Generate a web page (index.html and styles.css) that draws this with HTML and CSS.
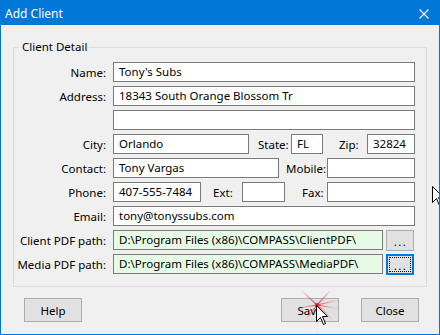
FILE: index.html
```html
<!DOCTYPE html>
<html>
<head>
<meta charset="utf-8">
<link rel="stylesheet" href="styles.css">
</head>
<body>
<div class="window">
  <div class="titlebar">
    <span class="title">Add Client</span>
    <svg class="close" width="10" height="10" viewBox="0 0 10 10"><path d="M0.5 0.5 L9.5 9.5 M9.5 0.5 L0.5 9.5" stroke="#fff" stroke-width="1.1" fill="none"/></svg>
  </div>
  <div class="content">
    <div class="group">
      <span class="group-title">Client Detail</span>
      <div class="row"><span class="lbl">Name:</span><div class="field full">Tony's Subs</div></div>
      <div class="row"><span class="lbl">Address:</span><div class="field full">18343 South Orange Blossom Tr</div></div>
      <div class="row"><span class="lbl"></span><div class="field full"></div></div>
      <div class="row">
        <span class="lbl">City:</span><div class="field w-city">Orlando</div>
        <span class="sub l-state">State:</span><div class="field w-state">FL</div>
        <span class="sub l-zip">Zip:</span><div class="field w-zip">32824</div>
      </div>
      <div class="row">
        <span class="lbl">Contact:</span><div class="field w-contact">Tony Vargas</div>
        <span class="sub l-mobile">Mobile:</span><div class="field w-88"></div>
      </div>
      <div class="row">
        <span class="lbl">Phone:</span><div class="field w-88">407-555-7484</div>
        <span class="sub l-ext">Ext:</span><div class="field w-ext"></div>
        <span class="sub l-fax">Fax:</span><div class="field w-88"></div>
      </div>
      <div class="row"><span class="lbl">Email:</span><div class="field full">tony@tonyssubs.com</div></div>
      <div class="row">
        <span class="lbl">Client PDF path:</span><div class="field path">D:\Program Files (x86)\COMPASS\ClientPDF\</div>
        <div class="browse"><span>...</span></div>
      </div>
      <div class="row">
        <span class="lbl">Media PDF path:</span><div class="field path">D:\Program Files (x86)\COMPASS\MediaPDF\</div>
        <div class="browse focused"><span class="focus-ring">...</span></div>
      </div>
    </div>
    <div class="buttons">
      <div class="btn">Help</div>
      <div class="spacer"></div>
      <div class="btn">Save</div>
      <div class="btn">Close</div>
    </div>
  </div>

  <svg class="sparkle" width="46" height="48" viewBox="0 0 46 48">
    <defs>
      <radialGradient id="rg" cx="20" cy="17" r="22" gradientUnits="userSpaceOnUse">
        <stop offset="0" stop-color="#e8303a" stop-opacity="1"/>
        <stop offset="1" stop-color="#f48890" stop-opacity="0.1"/>
      </radialGradient>
    </defs>
    <g stroke="url(#rg)" stroke-width="1.2" fill="none">
      <path d="M20 17 L4 2"/>
      <path d="M20 17 L42 12"/>
      <path d="M20 17 L43 21"/>
      <path d="M20 17 L2 20"/>
      <path d="M20 17 L20 46"/>
      <path d="M20 17 L10 30"/>
      <path d="M20 17 L33 3"/>
      <path d="M20 17 L36 32"/>
    </g>
    <circle cx="20" cy="17" r="2" fill="#e02030"/>
  </svg>
  <svg class="cursor cursor-save" width="13" height="21" viewBox="0 0 13 21"><path d="M0.5 0.5 L0.5 16.5 L4.5 12.5 L7.5 19.5 L9.5 18.5 L6.5 11.5 L11.5 11.5 Z" fill="#fff" stroke="#000" stroke-width="1"/></svg>
  <svg class="cursor cursor-edge" width="13" height="21" viewBox="0 0 13 21"><path d="M0.5 0.5 L0.5 16.5 L4.5 12.5 L7.5 19.5 L9.5 18.5 L6.5 11.5 L11.5 11.5 Z" fill="#fff" stroke="#000" stroke-width="1"/></svg>
</div>
</body>
</html>
```
FILE: styles.css
```css
html, body {
  margin: 0;
  padding: 0;
  background: #f0f0f0;
}
body {
  font-family: "Noto Sans", "DejaVu Sans", sans-serif;
  font-size: 11.5px;
  color: #000;
}
.window {
  position: relative;
  width: 440px;
  height: 335px;
  box-sizing: border-box;
  border: 1px solid #0078d7;
  background: #f0f0f0;
  overflow: hidden;
}
.titlebar {
  height: 24px;
  background: #0078d7;
  display: flex;
  align-items: center;
  padding: 0 0 0 4px;
  color: #fff;
}
.title {
  flex: 1;
  font-size: 12px;
  line-height: 14px;
  padding-top: 1px;
}
.close {
  margin-right: 10px;
  margin-top: 1px;
}
.content {
  display: flex;
  flex-direction: column;
}
.group {
  position: relative;
  margin: 22px 0 0 12px;
  width: 414px;
  height: 240px;
  box-sizing: border-box;
  border: 1px solid #dcdcdc;
  padding: 14px 0 0 0;
  display: flex;
  flex-direction: column;
  gap: 4px;
}
.group-title {
  position: absolute;
  top: -9px;
  left: 6px;
  padding: 0 2px;
  background: #f0f0f0;
  line-height: 16px;
}
.row {
  display: flex;
  align-items: center;
  height: 20px;
}
.lbl {
  width: 92px;
  margin-right: 7px;
  text-align: right;
  white-space: nowrap;
}
.sub {
  white-space: nowrap;
}
.field {
  box-sizing: border-box;
  height: 20px;
  border: 1px solid #7a7a7a;
  background: #fff;
  padding: 0 5px;
  line-height: 18px;
  white-space: nowrap;
  overflow: hidden;
}
.full { width: 302px; }
.w-city { width: 136px; }
.w-state { width: 32px; }
.w-zip { width: 48px; }
.w-contact { width: 166px; }
.w-88 { width: 88px; }
.w-ext { width: 43px; }
.l-state { margin-left: 9px; width: 33px; }
.l-zip { margin-left: 16px; width: 28px; }
.l-mobile { margin-left: 7px; width: 41px; }
.l-ext { margin-left: 12px; width: 29px; }
.l-fax { margin-left: 17px; width: 25px; }
.path {
  width: 270px;
  background: #e6fbe6;
}
.browse {
  box-sizing: border-box;
  margin-left: 3px;
  width: 28px;
  height: 21px;
  border: 1px solid #adadad;
  background: #e1e1e1;
  display: flex;
  align-items: center;
  justify-content: center;
  line-height: 12px;
  letter-spacing: 1.5px;
  padding: 3px 0 0 1px;
}
.browse.focused {
  border: 2px solid #0078d7;
  padding: 1px;
}
.focus-ring {
  box-sizing: border-box;
  width: 100%;
  height: 100%;
  border: 1px dotted #000;
  display: flex;
  align-items: center;
  justify-content: center;
  padding: 3px 0 0 1px;
}
.buttons {
  display: flex;
  margin-top: 11px;
  padding: 0 20px 0 23px;
}
.spacer { flex: 1; }
.btn {
  box-sizing: border-box;
  width: 58px;
  height: 24px;
  border: 1px solid #adadad;
  background: #e1e1e1;
  display: flex;
  align-items: center;
  justify-content: center;
}
.btn + .btn { margin-left: 22px; }
.sparkle {
  position: absolute;
  left: 296px;
  top: 287px;
}
.cursor {
  position: absolute;
}
.cursor-save {
  left: 315px;
  top: 304px;
}
.cursor-edge {
  left: 431px;
  top: 185px;
}
```
